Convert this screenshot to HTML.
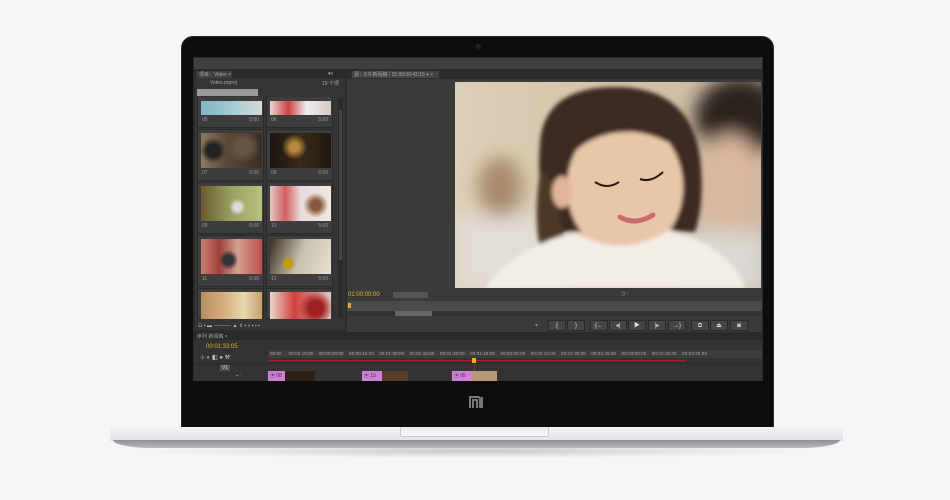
<!DOCTYPE html>
<html><head><meta charset="utf-8"><style>
*{margin:0;padding:0;box-sizing:border-box}
body{width:950px;height:500px;background:#f6f6f6;position:relative;overflow:hidden;font-family:"Liberation Sans","Noto Sans CJK SC",sans-serif}
.a{position:absolute}
.t{position:absolute;font-size:5px;color:#aaa;white-space:nowrap}
.cell{position:absolute;width:67px;height:52px;background:#3d3d3d;border:1px solid #2a2a2a}
.img{position:absolute;left:3px;top:3px;width:61px;height:35px}
.lb{position:absolute;bottom:4px;left:4px;font-size:5px;color:#999}
.lr{position:absolute;bottom:4px;right:4px;font-size:5px;color:#999}
.btn{position:absolute;top:320px;width:18px;height:11px;background:#454545;border:1px solid #2a2a2a;border-radius:1px;font-size:6px;color:#ddd;text-align:center;line-height:10px}
</style></head><body>
<div class="a" style="left:130px;top:444px;width:690px;height:14px;background:radial-gradient(ellipse at center,rgba(0,0,0,.18),rgba(0,0,0,0) 70%)"></div>
<div class="a" style="left:181px;top:36px;width:593px;height:393px;background:#0d0d0d;border-radius:12px 12px 0 0;border:1px solid #2a2a2a"></div>
<div class="a" style="left:476px;top:44px;width:5px;height:5px;border-radius:50%;background:#222"></div>
<div class="a" style="left:193px;top:57px;width:570px;height:324px;background:#2b2b2b"></div>
<div class="a" style="left:194px;top:58px;width:568px;height:11px;background:#404040"></div>
<div class="a" style="left:195px;top:70px;width:150px;height:260px;background:#353535"></div>
<div class="a" style="left:195px;top:70px;width:150px;height:8px;background:#2a2a2a"></div>
<div class="a" style="left:196px;top:71px;width:36px;height:7px;background:#3f3f3f"></div>
<div class="t" style="left:199px;top:71px">项目：Video ×</div>
<div class="t" style="left:328px;top:71px">▾≡</div>
<div class="t" style="left:210px;top:80px">Video.prproj</div>
<div class="t" style="left:322px;top:80px">19 个项</div>
<div class="a" style="left:197px;top:89px;width:61px;height:7px;background:#9a9a9a"></div>
<div class="a" style="left:338px;top:98px;width:5px;height:220px;background:#2a2a2a"></div>
<div class="a" style="left:339px;top:110px;width:3px;height:150px;background:#444"></div>

<div class="cell" style="left:197px;top:83px;height:45px;clip-path:inset(14px 0 0 0)"><div class="img" style="top:17px;height:14px;background:linear-gradient(90deg,#7fb7c0,#a9d0d4 60%,#d9d9d9)"></div><div class="lb">05</div><div class="lr">5:00</div></div>
<div class="cell" style="left:266px;top:83px;height:45px;clip-path:inset(14px 0 0 0)"><div class="img" style="top:17px;height:14px;background:linear-gradient(90deg,#e8d8d0,#c44 30%,#eee 60%,#d8c8c0)"></div><div class="lb">06</div><div class="lr">5:00</div></div>
<div class="cell" style="left:197px;top:129px"><div class="img" style="background:radial-gradient(circle at 20% 50%,#222 12%,transparent 25%),radial-gradient(circle at 70% 40%,#654 15%,transparent 35%),linear-gradient(90deg,#8a7a60,#5a4a38 40%,#3a2e24)"></div><div class="lb">07</div><div class="lr">5:00</div></div>
<div class="cell" style="left:266px;top:129px"><div class="img" style="background:radial-gradient(circle at 40% 40%,#b88a40 10%,transparent 30%),linear-gradient(90deg,#1a1510,#3a2a18 50%,#201810)"></div><div class="lb">08</div><div class="lr">5:00</div></div>
<div class="cell" style="left:197px;top:182px"><div class="img" style="background:radial-gradient(circle at 60% 60%,#ddd 8%,transparent 20%),linear-gradient(90deg,#6a5a30,#9aa060 50%,#b8c080)"></div><div class="lb">09</div><div class="lr">5:00</div></div>
<div class="cell" style="left:266px;top:182px"><div class="img" style="background:radial-gradient(circle at 75% 55%,#8a5a40 10%,transparent 25%),linear-gradient(90deg,#e8c8c8,#d06060 25%,#eadada 50%,#f0e8e0)"></div><div class="lb">10</div><div class="lr">5:00</div></div>
<div class="cell" style="left:197px;top:235px"><div class="img" style="background:radial-gradient(circle at 45% 60%,#333 12%,transparent 25%),linear-gradient(90deg,#c88070,#a04040 30%,#d0a090 60%,#c05050)"></div><div class="lb">11</div><div class="lr">5:00</div></div>
<div class="cell" style="left:266px;top:235px"><div class="img" style="background:radial-gradient(circle at 30% 70%,#c90 6%,transparent 15%),linear-gradient(110deg,#3a3020,#c8c0b0 50%,#e8e0d0)"></div><div class="lb">12</div><div class="lr">5:00</div></div>
<div class="cell" style="left:197px;top:288px;height:31px"><div class="img" style="height:27px;background:linear-gradient(90deg,#b89060,#d8b080 40%,#e8d8b0 70%,#c8a070)"></div></div>
<div class="cell" style="left:266px;top:288px;height:31px"><div class="img" style="height:27px;background:radial-gradient(circle at 75% 60%,#a02020 15%,transparent 35%),linear-gradient(90deg,#e8d8c8,#d04040 40%,#e0c8c0)"></div></div>
<div class="t" style="left:198px;top:323px;color:#bbb">☷ ▪ ▬ ───── ▲ ⇕ ▪ ⌕ ▪ ▪ ▪</div>

<div class="a" style="left:347px;top:70px;width:415px;height:262px;background:#3a3a3a"></div>
<div class="a" style="left:347px;top:70px;width:415px;height:9px;background:#2c2c2c"></div>
<div class="a" style="left:352px;top:71px;width:87px;height:7px;background:#444"></div>
<div class="t" style="left:354px;top:71px">源：0 9 新闻稿 / 15 00:00:42:15 ▾ ×</div>
<svg class="a" style="left:455px;top:82px" width="306" height="206" viewBox="0 0 306 206">
<defs>
<filter id="b" x="-30%" y="-30%" width="160%" height="160%"><feGaussianBlur stdDeviation="9"/></filter>
<filter id="s" x="-20%" y="-20%" width="140%" height="140%"><feGaussianBlur stdDeviation="2"/></filter>
<linearGradient id="bg" x1="0" x2="1"><stop offset="0" stop-color="#ddd0b8"/><stop offset=".5" stop-color="#d4c4a8"/><stop offset="1" stop-color="#c8b8a4"/></linearGradient>
</defs>
<rect width="306" height="206" fill="url(#bg)"/>
<g filter="url(#b)">
<ellipse cx="45" cy="105" rx="22" ry="30" fill="#a88a6c"/>
<rect x="0" y="135" width="100" height="75" fill="#e2ddd6"/>
<ellipse cx="285" cy="35" rx="45" ry="40" fill="#2a221c"/>
<ellipse cx="275" cy="100" rx="32" ry="48" fill="#dab69c"/>
<rect x="225" y="150" width="85" height="60" fill="#dcd8d4"/>
</g>
<g filter="url(#s)">
<path d="M85 60 Q90 5 160 5 Q235 5 245 75 Q250 120 240 150 L100 150 Q80 120 85 60Z" fill="#3e2c20"/>
<path d="M85 90 Q75 160 95 190 L120 180 Q100 140 103 100Z" fill="#4e3828"/>
<ellipse cx="170" cy="105" rx="58" ry="68" fill="#eac6a8"/>
<path d="M100 70 Q120 20 175 22 Q225 25 240 80 Q215 55 180 50 Q135 48 110 80Z" fill="#3e2c20"/>
<ellipse cx="107" cy="110" rx="10" ry="16" fill="#dfb698"/>
<path d="M30 206 Q60 165 120 150 Q165 178 215 148 Q275 165 290 206Z" fill="#f2ede6"/>
</g>
<path d="M165 135 Q180 144 198 133" stroke="#c86c70" stroke-width="5" fill="none" stroke-linecap="round"/>
<path d="M140 100 Q152 108 164 100 M185 97 Q196 101 208 90" stroke="#2a1a10" stroke-width="2" fill="none"/>
</svg>
<div class="t" style="left:348px;top:292px;color:#e8b020;font-size:6px">01:00:00:00</div>
<div class="a" style="left:393px;top:292px;width:35px;height:6px;background:#555"></div>
<div class="t" style="left:622px;top:291px;color:#bbb">▯ ◦</div>
<div class="a" style="left:347px;top:301px;width:415px;height:10px;background:#4a4a4a"></div>
<div class="a" style="left:348px;top:303px;width:3px;height:5px;background:#e8b020"></div>
<div class="a" style="left:347px;top:311px;width:415px;height:5px;background:#333"></div>
<div class="a" style="left:395px;top:311px;width:37px;height:5px;background:#666"></div>
<div class="t" style="left:535px;top:322px;color:#888;font-size:6px">▾</div>
<div class="btn" style="left:548px">{</div><div class="btn" style="left:567px">}</div>
<div class="btn" style="left:590px">{←</div><div class="btn" style="left:609px">◂|</div><div class="btn" style="left:628px">▶</div><div class="btn" style="left:648px">|▸</div><div class="btn" style="left:668px">→}</div>
<div class="btn" style="left:691px">⧉</div><div class="btn" style="left:710px">⏏</div><div class="btn" style="left:730px">◙</div>

<div class="a" style="left:194px;top:332px;width:568px;height:49px;background:#333"></div>
<div class="a" style="left:194px;top:332px;width:568px;height:8px;background:#2a2a2a"></div>
<div class="t" style="left:197px;top:333px">序列 新闻稿 ×</div>
<div class="t" style="left:206px;top:344px;color:#e8b020;font-size:6px">00:01:33:05</div>
<div class="t" style="left:200px;top:354px;color:#ccc;font-size:6px">⊹ ◐ ◧ ● ⚒</div>
<div class="a" style="left:268px;top:350px;width:494px;height:8px;background:#3d3d3d"></div>
<div class="t" style="left:270px;top:351px;font-size:4.5px;letter-spacing:.1px">00:00 &nbsp;&nbsp;&nbsp; 00:00:15:00 &nbsp;&nbsp; 00:00:30:00 &nbsp;&nbsp; 00:00:45:00 &nbsp;&nbsp; 00:01:00:00 &nbsp;&nbsp; 00:01:15:00 &nbsp;&nbsp; 00:01:30:00 &nbsp;&nbsp; 00:01:45:00 &nbsp;&nbsp; 00:02:00:00 &nbsp;&nbsp; 00:02:15:00 &nbsp;&nbsp; 00:02:30:00 &nbsp;&nbsp; 00:02:45:00 &nbsp;&nbsp; 00:03:00:00 &nbsp;&nbsp; 00:03:15:00 &nbsp;&nbsp; 00:03:30:00</div>
<div class="a" style="left:268px;top:360px;width:418px;height:1px;background:#b02020"></div>
<div class="a" style="left:472px;top:358px;width:4px;height:5px;background:#e8b020"></div>
<div class="a" style="left:474px;top:363px;width:1px;height:18px;background:#b02020"></div>
<div class="a" style="left:194px;top:363px;width:568px;height:1px;background:#2a2a2a"></div>
<div class="t" style="left:220px;top:365px;background:#555;color:#ddd;padding:0 2px">V1</div>
<div class="t" style="left:236px;top:373px">▪ ◦</div>
<div class="a" style="left:268px;top:371px;width:17px;height:10px;background:#d27fd8"></div>
<div class="a" style="left:285px;top:371px;width:30px;height:10px;background:#2a2018"></div>
<div class="a" style="left:362px;top:371px;width:20px;height:10px;background:#d27fd8"></div>
<div class="a" style="left:382px;top:371px;width:26px;height:10px;background:#5a3a28"></div>
<div class="a" style="left:452px;top:371px;width:20px;height:10px;background:#d27fd8"></div>
<div class="a" style="left:472px;top:371px;width:25px;height:10px;background:#b89878"></div>
<div class="t" style="left:270px;top:372px;color:#333">▣ 08</div>
<div class="t" style="left:364px;top:372px;color:#333">▣ 15</div>
<div class="t" style="left:454px;top:372px;color:#333">▣ 05</div>

<svg class="a" style="left:469px;top:396px" width="18" height="13" viewBox="0 0 18 13"><path d="M1 12V1H9Q11 1 11 3V12M4 12V4H8V12M13 1V12" stroke="#777" stroke-width="2" fill="none"/></svg>

<div class="a" style="left:110px;top:427px;width:733px;height:14px;background:linear-gradient(#f4f4f6,#e2e2e6);border-radius:2px 2px 0 0"></div>
<div class="a" style="left:400px;top:427px;width:149px;height:10px;background:linear-gradient(#e8e8ea,#f8f8fa);border-radius:0 0 3px 3px;border:1px solid #c8c8cc;border-top:none"></div>
<div class="a" style="left:113px;top:440px;width:727px;height:8px;background:linear-gradient(#8f8f97,#b8b8be);border-radius:0 0 40px 40px/0 0 8px 8px"></div>
</body></html>
